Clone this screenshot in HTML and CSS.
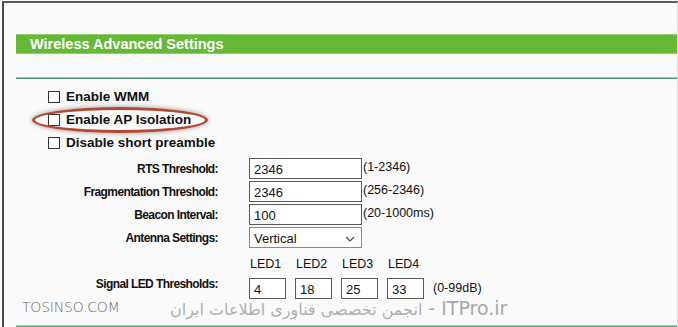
FILE: index.html
```html
<!DOCTYPE html>
<html>
<head>
<meta charset="utf-8">
<link rel="stylesheet" href="styles.css">
</head>
<body>
<div class="frame">
  <div class="bar">Wireless Advanced Settings</div>
  <div class="rule"></div>
  <div class="checks">
    <div class="check"><span class="box"></span>Enable WMM</div>
    <div class="check"><span class="box"></span>Enable AP Isolation</div>
    <div class="check"><span class="box"></span>Disable short preamble</div>
  </div>
  <div class="form">
    <div class="label">RTS Threshold:</div>
    <div class="field"><span class="input">2346</span><span class="hint">(1-2346)</span></div>
    <div class="label">Fragmentation Threshold:</div>
    <div class="field"><span class="input">2346</span><span class="hint">(256-2346)</span></div>
    <div class="label">Beacon Interval:</div>
    <div class="field"><span class="input">100</span><span class="hint">(20-1000ms)</span></div>
    <div class="label">Antenna Settings:</div>
    <div class="field"><span class="input select">Vertical<svg class="chev" width="10" height="6" viewBox="0 0 10 6"><path d="M1 1 L5 5 L9 1" fill="none" stroke="#444" stroke-width="1.1"/></svg></span></div>
    <div class="label"></div>
    <div class="field leds-head"><span>LED1</span><span>LED2</span><span>LED3</span><span>LED4</span></div>
    <div class="label">Signal LED Thresholds:</div>
    <div class="field leds"><span class="input small">4</span><span class="input small">18</span><span class="input small">25</span><span class="input small">33</span><span class="hint2">(0-99dB)</span></div>
  </div>
  <div class="rule bottom"></div>
  <div class="oval"></div>
  <div class="wm1">TOSINSO.COM</div>
  <div class="wm2"><span class="fa">انجمن تخصصی فناوری اطلاعات ایران</span> - <span class="itp">ITPro.ir</span></div>
</div>
</body>
</html>
```
FILE: styles.css
```css
html, body {
  margin: 0;
  padding: 0;
  background: #fafafa;
  width: 678px;
  height: 327px;
  overflow: hidden;
}
.frame {
  position: relative;
  margin: 1px 0 0 2px;
  height: 340px;
  border-top: 2px solid #5a5a5a;
  border-left: 2px solid #4a4a4a;
  border-right: 1px solid #dcdcdc;
  box-sizing: border-box;
  width: 676px;
  padding: 31px 0 0 12px;
  font-family: "Liberation Sans", Arial, sans-serif;
  color: #111;
}
.bar {
  height: 20px;
  background: #66b936;
  border-top: 1px solid #8fd06a;
  border-bottom: 1px solid #8fd06a;
  box-sizing: border-box;
  color: #fff;
  font-weight: bold;
  font-size: 14.5px;
  line-height: 18px;
  padding-left: 14px;
}
.rule {
  margin-top: 23px;
  height: 2px;
  background: #4f8f6c;
  border-top: 1px solid #9cc7ab;
  box-sizing: border-box;
}
.checks {
  margin-top: 6px;
  padding-left: 32px;
  display: flex;
  flex-direction: column;
}
.check {
  height: 23px;
  display: flex;
  align-items: center;
  font-weight: bold;
  font-size: 13.5px;
}
.box {
  width: 10px;
  height: 10px;
  border: 1px solid #333;
  background: #fff;
  margin-right: 6px;
}
.form {
  margin-top: 3px;
  display: grid;
  grid-template-columns: 203px auto;
  column-gap: 30px;
  grid-auto-rows: 23px;
}
.label {
  text-align: right;
  font-weight: bold;
  font-size: 12px;
  letter-spacing: -0.6px;
  display: flex;
  align-items: center;
  justify-content: flex-end;
  padding-right: 1px;
}
.field {
  display: flex;
  align-items: center;
}
.input {
  width: 113px;
  height: 21px;
  box-sizing: border-box;
  border: 1px solid #5a5a5a;
  background: #fff;
  font-size: 13px;
  line-height: 19px;
  padding: 2px 0 0 4px;
  display: flex;
  align-items: center;
}
.select {
  justify-content: space-between;
  padding-left: 4px;
  padding-right: 6px;
  border-color: #8a8a8a;
}
.chev { margin-top: 1px; }
.hint {
  font-size: 12.5px;
  margin-left: 1px;
  align-self: flex-start;
  margin-top: 3px;
}
.leds-head {
  gap: 0;
  font-size: 12.5px;
  padding-top: 7px;
}
.leds-head span {
  width: 46px;
  padding-left: 1px;
  box-sizing: border-box;
}
.leds {
  gap: 9px;
  margin-top: 9px;
}
.input.small {
  width: 37px;
}
.hint2 {
  font-size: 12.5px;
}
.rule.bottom {
  margin-top: 30px;
  background: #5f9f78;
  border-top: 1px solid #a6cfb5;
}
.oval {
  position: absolute;
  left: 28px;
  top: 104px;
  width: 176px;
  height: 26px;
  box-sizing: border-box;
  border: 3px solid #b24a33;
  border-radius: 50%;
  box-shadow: 0 0 4px 1px rgba(90, 90, 90, 0.45);
}
.wm1 {
  position: absolute;
  left: 18px;
  top: 296px;
  font-family: "DejaVu Sans", sans-serif;
  font-weight: 200;
  font-size: 14px;
  color: #6a6a6a;
  letter-spacing: -0.2px;
}
.wm2 {
  position: absolute;
  left: 166px;
  top: 294px;
  direction: ltr;
  font-family: "DejaVu Sans", sans-serif;
  font-size: 19px;
  color: #a8a8a8;
  white-space: nowrap;
}
.fa {
  font-size: 16px;
  color: #b0b0b0;
}
.itp {
  font-size: 19px;
}
```
